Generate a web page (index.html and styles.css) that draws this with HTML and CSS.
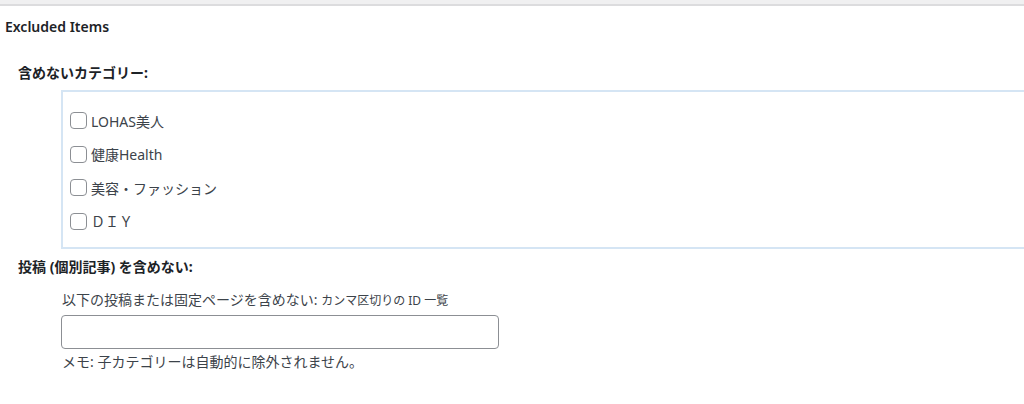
FILE: index.html
```html
<!DOCTYPE html>
<html lang="ja">
<head>
  <meta charset="UTF-8">
  <meta name="viewport" content="width=device-width, initial-scale=1.0">
  <title>Excluded Items</title>
  <link rel="stylesheet" href="styles.css">
</head>
<body>

  <!-- Top edge of the admin screen -->
  <div class="topbar"></div>

  <div class="panel">
    <h2 class="panel-title">Excluded Items</h2>

    <!-- Categories -->
    <div class="field">
      <h3 class="field-title">含めないカテゴリー:</h3>
      <div class="category-box">
        <label class="cat-row"><input type="checkbox" class="check"> LOHAS美人</label>
        <label class="cat-row"><input type="checkbox" class="check"> 健康Health</label>
        <label class="cat-row"><input type="checkbox" class="check"> 美容・ファッション</label>
        <label class="cat-row"><input type="checkbox" class="check"> ＤＩＹ</label>
      </div>
    </div>

    <!-- Posts -->
    <div class="field">
      <h3 class="field-title">投稿 (個別記事) を含めない:</h3>
      <div class="field-body">
        <label class="field-label" for="excludePosts">以下の投稿または固定ページを含めない: <small>カンマ区切りの ID 一覧</small></label>
        <input type="text" id="excludePosts" class="text-input">
        <p class="note">メモ: 子カテゴリーは自動的に除外されません。</p>
      </div>
    </div>
  </div>

</body>
</html>
```

FILE: styles.css
```css
    body {
      font-family: "Noto Sans", "Noto Sans CJK JP", sans-serif;
      margin: 0;
      padding: 0;
      background-color: #fff;
      color: #3c434a;
      overflow: hidden;
    }
    .topbar {
      height: 4px;
      background-color: #f0f0f1;
      border-bottom: 2px solid #dcdcde;
    }
    .panel-title {
      margin: 0;
      padding: 12px 0 0 5px;
      font-size: 14px;
      line-height: 18px;
      font-weight: 600;
      color: #1d2327;
    }
    .field-title {
      margin: 0;
      padding-left: 18px;
      font-size: 14px;
      line-height: 20px;
      font-weight: bold;
      color: #1d2327;
    }
    .panel-title + .field .field-title {
      margin-top: 27px;
    }
    .category-box {
      margin: 7px -20px 0 61px;
      padding: 12px 0 9px 7px;
      border: 2px solid #d5e5f4;
    }
    .cat-row {
      display: flex;
      align-items: center;
      gap: 4px;
      height: 33.5px;
      font-size: 14px;
    }
    .check {
      appearance: none;
      -webkit-appearance: none;
      width: 17px;
      height: 17px;
      margin: 0;
      border: 1px solid #8c8f94;
      border-radius: 4px;
      background: #fff;
    }
    .field + .field .field-title {
      margin-top: 8px;
    }
    .field-body {
      padding: 14px 0 0 62px;
    }
    .field-label {
      display: block;
      font-size: 14px;
      line-height: 18px;
    }
    .field-label small {
      font-size: 12px;
    }
    .text-input {
      display: block;
      box-sizing: border-box;
      width: 438px;
      height: 34px;
      margin: 5px 0 0 -1px;
      border: 1px solid #8c8f94;
      border-radius: 4px;
      background: #fff;
    }
    .note {
      margin: 4px 0 0;
      font-size: 14px;
      line-height: 18px;
    }
```
